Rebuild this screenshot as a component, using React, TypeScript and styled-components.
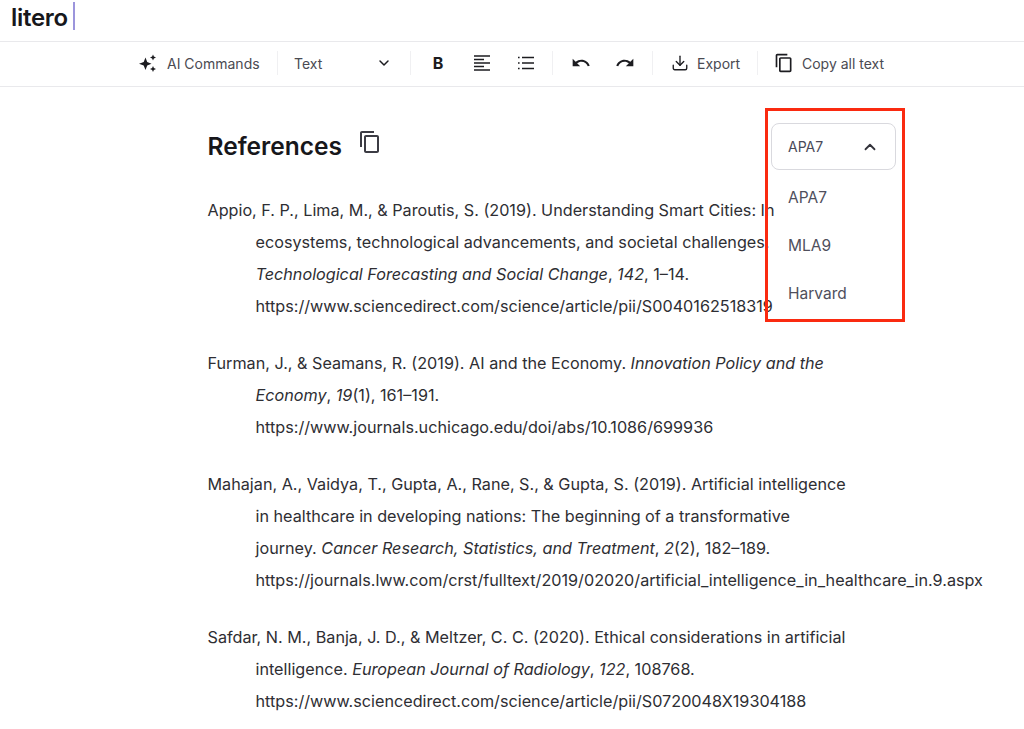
import React from 'react'
import styled, { createGlobalStyle } from 'styled-components'
import { ChevronDown, ChevronUp, Download } from 'lucide-react'

const GlobalStyle = createGlobalStyle`
    html, body {
        margin: 0;
        padding: 0;
        background: #fff;
        overflow: hidden;
    }
    body {
        font-family: Inter, "Liberation Sans", sans-serif;
        color: #2b2b2f;
    }
`

const Page = styled.div`
    position: relative;
    width: 1024px;
    height: 729px;
    overflow: hidden;
    background: #fff;
`

const TitleBar = styled.header`
    height: 41px;
    display: flex;
    align-items: center;
    padding-left: 11px;
    border-bottom: 1px solid #e9e9ec;
    box-sizing: content-box;
`

const Logo = styled.div`
    font-size: 24px;
    font-weight: 600;
    letter-spacing: -0.3px;
    color: #17171b;
    line-height: 28px;
    margin-top: -5px;
`

const Caret = styled.div`
    width: 2px;
    height: 28px;
    margin-left: 5px;
    margin-top: -10px;
    background: #9c95dc;
`

const Toolbar = styled.nav`
    height: 45px;
    display: flex;
    align-items: center;
    padding-left: 138px;
    padding-bottom: 2px;
    box-sizing: border-box;
    border-bottom: 1px solid #e9e9ec;
`

const ToolGroup = styled.div<{ $width: number; $gap?: number; $start?: number }>`
    width: ${p => p.$width}px;
    height: 24px;
    box-sizing: border-box;
    padding-left: ${p => p.$start ?? 0}px;
    display: flex;
    align-items: center;
    gap: ${p => p.$gap ?? 0}px;
    border-right: 1px solid #f0f0f2;
    &:last-child {
        border-right: none;
    }
`

const ToolLabel = styled.span`
    font-size: 14px;
    color: #4a4a52;
    white-space: nowrap;
`

const IconSlot = styled.span<{ $size?: number; $gap?: number }>`
    width: ${p => p.$size ?? 20}px;
    height: ${p => p.$size ?? 20}px;
    flex: none;
    display: inline-flex;
    align-items: center;
    justify-content: center;
    margin-right: ${p => p.$gap ?? 0}px;
    color: #1c1c20;
`

const SelectSpacer = styled.span`
    flex: 1;
`

const BoldMark = styled.span`
    font-size: 16px;
    font-weight: 700;
    color: #1c1c20;
    width: 20px;
    text-align: center;
`

const Document = styled.main`
    padding: 41px 0 0 207.5px;
`

const HeadingRow = styled.div`
    display: flex;
    align-items: flex-start;
    height: 66px;
`

const Heading = styled.h1`
    margin: 0;
    font-size: 24.5px;
    font-weight: 600;
    line-height: 36px;
    color: #17171b;
`

const HeadingCopy = styled.span`
    display: inline-flex;
    margin-left: 16px;
    margin-top: 2px;
    color: #3c3c44;
`

const Reference = styled.section`
    margin-bottom: 25px;
    font-size: 16.2px;
    line-height: 32px;
    color: #2e2e33;
    white-space: nowrap;
`

const RefLine = styled.div<{ $hanging?: boolean }>`
    padding-left: ${p => (p.$hanging ? 48 : 0)}px;
`

const Highlight = styled.div`
    position: absolute;
    left: 765px;
    top: 108px;
    width: 140px;
    height: 214px;
    box-sizing: border-box;
    border: 3px solid #fa2a10;
    padding: 12px 6px 0 3px;
`

const StyleSelect = styled.div`
    height: 47px;
    box-sizing: border-box;
    border: 1px solid #d9d9de;
    border-radius: 8px;
    display: flex;
    align-items: center;
    justify-content: space-between;
    padding: 0 16px;
    font-size: 14px;
    color: #4a4a58;
`

const StyleOption = styled.div`
    height: 48px;
    display: flex;
    align-items: center;
    padding-left: 17px;
    font-size: 15.5px;
    color: #4f4f5c;
`

const OptionList = styled.div`
    padding-top: 3px;
`

const Sparkles = () => (
    <svg width="20" height="20" viewBox="0 0 20 20" fill="currentColor">
        <path d="M7.5 4.5 9.2 9l4.3 1.7-4.3 1.7-1.7 4.6-1.8-4.6L1 10.7 5.7 9z" />
        <path d="M15 1.5l.9 2.1 2.1.9-2.1.9-.9 2.1-.9-2.1-2.1-.9 2.1-.9z" />
        <path d="M15 13l.9 2.1 2.1.9-2.1.9-.9 2.1-.9-2.1-2.1-.9 2.1-.9z" />
    </svg>
)

const AlignLeft = () => (
    <svg width="18" height="18" viewBox="0 0 18 18" stroke="currentColor" strokeWidth="1.5">
        <path d="M1 2h16M1 5.5h10M1 9h16M1 12.5h10M1 16h16" />
    </svg>
)

const BulletList = () => (
    <svg width="18" height="18" viewBox="0 0 18 18" stroke="currentColor" strokeWidth="1.6">
        <path d="M5 3.5h12M5 9h12M5 14.5h12" />
        <path d="M1 3.5h1.6M1 9h1.6M1 14.5h1.6" />
    </svg>
)

const Undo = () => (
    <svg width="20" height="20" viewBox="0 0 24 24" fill="currentColor">
        <path d="M12.5 8c-2.65 0-5.05.99-6.9 2.6L2 7v9h9l-3.62-3.62c1.39-1.16 3.16-1.88 5.12-1.88 3.54 0 6.55 2.31 7.6 5.5l2.37-.78C21.08 11.03 17.15 8 12.5 8z" />
    </svg>
)

const Redo = () => (
    <svg width="20" height="20" viewBox="0 0 24 24" fill="currentColor">
        <path d="M18.4 10.6C16.55 8.99 14.15 8 11.5 8c-4.65 0-8.58 3.03-9.96 7.22L3.9 16c1.05-3.19 4.05-5.5 7.6-5.5 1.95 0 3.73.72 5.12 1.88L13 16h9V7z" />
    </svg>
)

const CopyIcon = ({ size = 24 }: { size?: number }) => (
    <svg width={size} height={size} viewBox="0 0 24 24" fill="currentColor">
        <path d="M16 1H4c-1.1 0-2 .9-2 2v14h2V3h12V1zm3 4H8c-1.1 0-2 .9-2 2v14c0 1.1.9 2 2 2h11c1.1 0 2-.9 2-2V7c0-1.1-.9-2-2-2zm0 16H8V7h11v14z" />
    </svg>
)

type RefEntry = { text: React.ReactNode; hanging?: boolean }

const references: RefEntry[][] = [
    [
        { text: <>Appio, F. P., Lima, M., &amp; Paroutis, S. (2019). Understanding Smart Cities: In</> },
        { hanging: true, text: <>ecosystems, technological advancements, and societal challenges.</> },
        { hanging: true, text: <><i>Technological Forecasting and Social Change</i>, <i>142</i>, 1–14.</> },
        { hanging: true, text: <>https://www.sciencedirect.com/science/article/pii/S0040162518319</> },
    ],
    [
        { text: <>Furman, J., &amp; Seamans, R. (2019). AI and the Economy. <i>Innovation Policy and the</i></> },
        { hanging: true, text: <><i>Economy</i>, <i>19</i>(1), 161–191.</> },
        { hanging: true, text: <>https://www.journals.uchicago.edu/doi/abs/10.1086/699936</> },
    ],
    [
        { text: <>Mahajan, A., Vaidya, T., Gupta, A., Rane, S., &amp; Gupta, S. (2019). Artificial intelligence</> },
        { hanging: true, text: <>in healthcare in developing nations: The beginning of a transformative</> },
        { hanging: true, text: <>journey. <i>Cancer Research, Statistics, and Treatment</i>, <i>2</i>(2), 182–189.</> },
        { hanging: true, text: <>https://journals.lww.com/crst/fulltext/2019/02020/artificial_intelligence_in_healthcare_in.9.aspx</> },
    ],
    [
        { text: <>Safdar, N. M., Banja, J. D., &amp; Meltzer, C. C. (2020). Ethical considerations in artificial</> },
        { hanging: true, text: <>intelligence. <i>European Journal of Radiology</i>, <i>122</i>, 108768.</> },
        { hanging: true, text: <>https://www.sciencedirect.com/science/article/pii/S0720048X19304188</> },
    ],
]

const App: React.FC = () => {
    return (
        <Page>
            <GlobalStyle />
            <TitleBar>
                <Logo>litero</Logo>
                <Caret />
            </TitleBar>
            <Toolbar>
                <ToolGroup $width={140}>
                    <IconSlot $gap={9}><Sparkles /></IconSlot>
                    <ToolLabel>AI Commands</ToolLabel>
                </ToolGroup>
                <ToolGroup $width={133} $start={16}>
                    <ToolLabel>Text</ToolLabel>
                    <SelectSpacer />
                    <IconSlot $gap={16}><ChevronDown size={16} strokeWidth={2.2} /></IconSlot>
                </ToolGroup>
                <ToolGroup $width={142} $start={17} $gap={24}>
                    <BoldMark>B</BoldMark>
                    <IconSlot><AlignLeft /></IconSlot>
                    <IconSlot><BulletList /></IconSlot>
                </ToolGroup>
                <ToolGroup $width={100} $start={18} $gap={24}>
                    <IconSlot><Undo /></IconSlot>
                    <IconSlot><Redo /></IconSlot>
                </ToolGroup>
                <ToolGroup $width={105} $start={17}>
                    <IconSlot $gap={7}><Download size={18} strokeWidth={1.8} /></IconSlot>
                    <ToolLabel>Export</ToolLabel>
                </ToolGroup>
                <ToolGroup $width={140} $start={16}>
                    <IconSlot $gap={8}><CopyIcon /></IconSlot>
                    <ToolLabel>Copy all text</ToolLabel>
                </ToolGroup>
            </Toolbar>
            <Document>
                <HeadingRow>
                    <Heading>References</Heading>
                    <HeadingCopy><CopyIcon /></HeadingCopy>
                </HeadingRow>
                {references.map((lines, i) => (
                    <Reference key={i}>
                        {lines.map((line, j) => (
                            <RefLine key={j} $hanging={line.hanging}>{line.text}</RefLine>
                        ))}
                    </Reference>
                ))}
            </Document>
            <Highlight>
                <StyleSelect>
                    APA7
                    <ChevronUp size={18} strokeWidth={2.4} color="#33333b" />
                </StyleSelect>
                <OptionList>
                    <StyleOption>APA7</StyleOption>
                    <StyleOption>MLA9</StyleOption>
                    <StyleOption>Harvard</StyleOption>
                </OptionList>
            </Highlight>
        </Page>
    )
}

export default App
